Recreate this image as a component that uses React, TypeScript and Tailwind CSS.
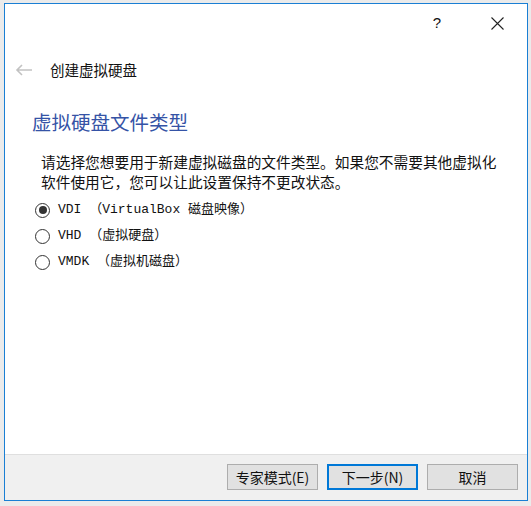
import React from "react";

const options = [
    { id: "vdi", label: "VDI （VirtualBox 磁盘映像）", checked: true },
    { id: "vhd", label: "VHD （虚拟硬盘）", checked: false },
    { id: "vmdk", label: "VMDK （虚拟机磁盘）", checked: false },
];

function Radio({ checked }: { checked: boolean }) {
    return <span className="w-[15px] h-[15px] rounded-full border border-[#333] bg-white flex items-center justify-center shrink-0">
        {checked && <span className="w-[8px] h-[8px] rounded-full bg-[#333]" />}
    </span>
}

export default function App() {
    const cjk = { fontFamily: '"Noto Sans CJK SC", "Liberation Sans", sans-serif' };

    return <div className="w-[531px] h-[506px] bg-[#ebebeb] pt-[3px] pl-[4px]" style={cjk}>
        <div className="w-[524px] h-[498px] border border-[#1a7fd4] flex flex-col">
            <div className="h-[450px] bg-white flex flex-col">
                {/* title bar */}
                <div className="h-[38px] flex items-center justify-end pr-[7px] text-[#111]">
                    <span className="w-[46px] text-center text-[15px] font-['Liberation_Sans'] mr-[14px]">?</span>
                    <span className="w-[46px] flex justify-center">
                        <svg width="13" height="13" viewBox="0 0 13 13" stroke="#222" strokeWidth="1.1">
                            <path d="M0.5 0.5 L12.5 12.5 M12.5 0.5 L0.5 12.5" />
                        </svg>
                    </span>
                </div>

                <div className="mt-[14px] h-[28px] flex items-center pl-[10px]">
                    <svg width="17" height="12" viewBox="0 0 17 12" fill="none" stroke="#c2c2c2" strokeWidth="1.6">
                        <path d="M17 6 H2 M7 1 L2 6 L7 11" />
                    </svg>
                    <span className="ml-[18px] text-[14.5px] text-[#111] leading-none">创建虚拟硬盘</span>
                </div>

                <h2 className="mt-[24px] pl-[27px] text-[19.5px] leading-[28px] text-[#3553a6]">虚拟硬盘文件类型</h2>

                <p className="mt-[16px] pl-[36px] text-[14.7px] leading-[20px] text-[#111]">
                    请选择您想要用于新建虚拟磁盘的文件类型。如果您不需要其他虚拟化<br />
                    软件使用它，您可以让此设置保持不更改状态。
                </p>

                <div className="mt-[5px] pl-[30px] flex flex-col">
                    {options.map(o => (
                        <label key={o.id} className="h-[26px] flex items-center gap-[8px] text-[13px] text-[#111]">
                            <Radio checked={o.checked} />
                            <span style={{ fontFamily: '"Liberation Mono", "Noto Sans CJK SC", monospace' }}>{o.label}</span>
                        </label>
                    ))}
                </div>
            </div>

            <div className="flex-1 bg-[#f0f0f0] border-t border-[#dfdfdf] flex items-start justify-end gap-[9px] pt-[9px] pr-[9px]">
                <button className="w-[91px] h-[26px] bg-[#e1e1e1] border border-[#adadad] text-[14px] text-[#111]">专家模式(E)</button>
                <button className="w-[91px] h-[26px] bg-[#e1e1e1] border-2 border-[#0078d7] text-[14px] text-[#111]">下一步(N)</button>
                <button className="w-[91px] h-[26px] bg-[#e1e1e1] border border-[#adadad] text-[14px] text-[#111]">取消</button>
            </div>
        </div>
    </div>
}
